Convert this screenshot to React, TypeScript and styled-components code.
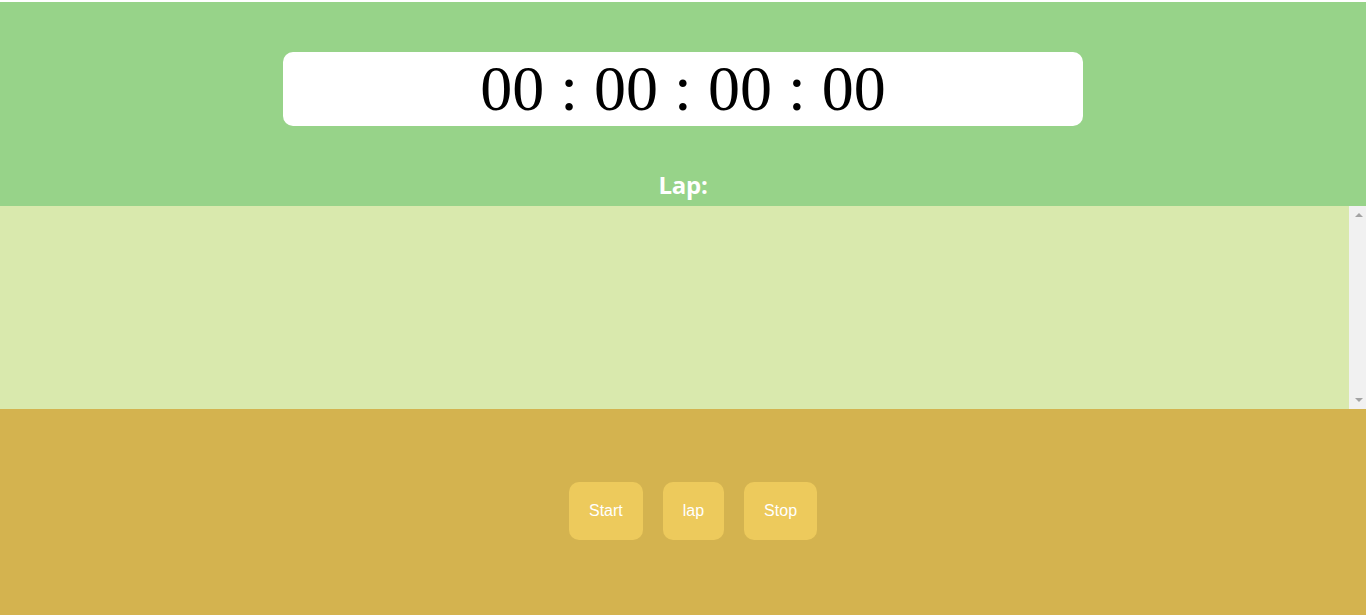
import React from "react";
import styled, { createGlobalStyle } from "styled-components";

const Global = createGlobalStyle`
  html, body { margin: 0; padding: 0; background: #ffffff; }
  body { padding-top: 2px; font-family: "Liberation Sans", Arial, sans-serif; }
`;

const Header = styled.section`
  height: 204px;
  background: #97d389;
  display: flex;
  flex-direction: column;
  align-items: center;
  box-sizing: border-box;
  padding-top: 50px;
`;

const Display = styled.div`
  width: 800px;
  height: 74px;
  background: #ffffff;
  border-radius: 10px;
  display: flex;
  align-items: center;
  justify-content: center;
  font-family: "Liberation Serif", "Times New Roman", serif;
  font-size: 64px;
  color: #000;
  line-height: 1;
`;

const LapTitle = styled.h2`
  margin: 45px 0 0;
  font-family: "Open Sans", "Noto Sans", sans-serif;
  font-weight: 700;
  font-size: 24px;
  line-height: 28px;
  color: #ffffff;
  letter-spacing: -0.3px;
`;

const LapPanel = styled.section`
  height: 203px;
  background: #d9e9ad;
  display: flex;
`;

const LapList = styled.ol`
  flex: 1;
  margin: 0;
  padding: 0;
  list-style: none;
  overflow: hidden;
`;

const ScrollTrack = styled.div`
  width: 17px;
  background: #f1f1f1;
  display: flex;
  flex-direction: column;
  justify-content: space-between;
  align-items: center;
  padding: 7px 0 7px;
  box-sizing: border-box;
`;

const Arrow = styled.span<{ $dir: "up" | "down" }>`
  width: 0;
  height: 0;
  border-left: 4px solid transparent;
  border-right: 4px solid transparent;
  ${(p) =>
    p.$dir === "up"
      ? "border-bottom: 4px solid #a3a3a3;"
      : "border-top: 4px solid #a3a3a3;"}
  transform: translateX(1px);
`;

const Footer = styled.section`
  height: 206px;
  box-sizing: border-box;
  padding-bottom: 2px;
  background: #d4b34f;
  display: flex;
  align-items: center;
  justify-content: center;
`;

const Button = styled.button`
  margin-left: 20px;
  padding: 20px;
  border: none;
  border-radius: 10px;
  background: #edca5c;
  color: #ffffff;
  font-family: "Liberation Sans", Arial, sans-serif;
  font-size: 16px;
  line-height: 18px;
  cursor: pointer;
`;

export default function App() {
  return (
    <>
      <Global />
      <Header>
        <Display>00 : 00 : 00 : 00</Display>
        <LapTitle>Lap:</LapTitle>
      </Header>
      <LapPanel>
        <LapList />
        <ScrollTrack>
          <Arrow $dir="up" />
          <Arrow $dir="down" />
        </ScrollTrack>
      </LapPanel>
      <Footer>
        <Button>Start</Button>
        <Button>lap</Button>
        <Button>Stop</Button>
      </Footer>
    </>
  );
}
